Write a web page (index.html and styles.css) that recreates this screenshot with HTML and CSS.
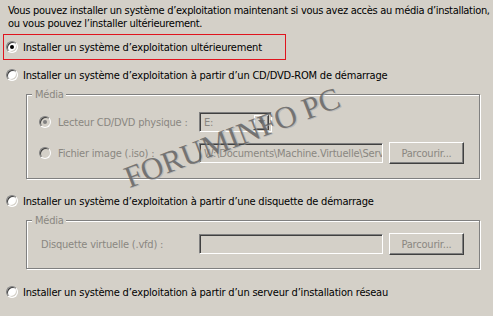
FILE: index.html
```html
<!DOCTYPE html>
<html lang="fr">
<head>
<meta charset="utf-8">
<title>Installation</title>
<link rel="stylesheet" href="styles.css">
</head>
<body>
<div class="page">
  <p class="intro">Vous pouvez installer un système d’exploitation maintenant si vous avez accès au média d’installation,<br>ou vous pouvez l’installer ultérieurement.</p>

  <div class="option option-focus"><span class="radio checked"></span><span class="option-text">Installer un système d’exploitation ultérieurement</span></div>

  <div class="option option-cd"><span class="radio"></span><span class="option-text">Installer un système d’exploitation à partir d’un CD/DVD-ROM de démarrage</span></div>

  <div class="group group-cd">
    <div class="legend">Média</div>
    <div class="field-row row-drive">
      <span class="radio disabled checked"></span>
      <span class="field-label">Lecteur CD/DVD physique :</span>
      <div class="combo">
        <span class="combo-value">E:</span>
        <span class="combo-btn"><svg width="7" height="4" viewBox="0 0 7 4"><path d="M0 0h7L3.5 4z" fill="#6f6f6f"/></svg></span>
      </div>
    </div>
    <div class="field-row row-iso">
      <span class="radio disabled"></span>
      <span class="field-label">Fichier image (.iso) :</span>
      <div class="textbox"><span class="textbox-value">W:\Documents\Machine.Virtuelle\Serv</span></div>
      <div class="button">Parcourir...</div>
    </div>
  </div>

  <div class="option option-floppy"><span class="radio"></span><span class="option-text">Installer un système d’exploitation à partir d’une disquette de démarrage</span></div>

  <div class="group group-floppy">
    <div class="legend">Média</div>
    <div class="field-row row-vfd">
      <span class="field-label field-label-wide">Disquette virtuelle (.vfd) :</span>
      <div class="textbox"></div>
      <div class="button">Parcourir...</div>
    </div>
  </div>

  <div class="option option-network"><span class="radio"></span><span class="option-text">Installer un système d’exploitation à partir d’un serveur d’installation réseau</span></div>

  <div class="watermark">FORUMINFO PC</div>
</div>
</body>
</html>
```
FILE: styles.css
```css
html, body {
  margin: 0;
  padding: 0;
  background: #d4d0c8;
}

.page {
  position: relative;
  width: 493px;
  height: 316px;
  overflow: hidden;
  font-family: "DejaVu Sans", Tahoma, sans-serif;
  font-stretch: condensed;
  font-size: 11px;
  line-height: 13px;
  letter-spacing: -0.2px;
  color: #000;
}

.intro {
  margin: 0;
  padding: 4px 0 0 8px;
  white-space: nowrap;
  letter-spacing: -0.3px;
}

.option {
  display: flex;
  align-items: center;
  gap: 5px;
  height: 16px;
  padding-left: 6px;
  white-space: nowrap;
}

.option-focus {
  box-sizing: border-box;
  width: 283px;
  height: 26px;
  margin: 4px 0 0 3px;
  padding-left: 2px;
  border: 1px solid #e0141e;
}

.option-cd { margin-top: 7px; }
.option-floppy { margin-top: 14px; }
.option-network { margin-top: 15px; }

.radio {
  position: relative;
  flex: none;
  box-sizing: border-box;
  width: 12px;
  height: 12px;
  border-radius: 50%;
  border: 1px solid;
  border-color: #808080 #ffffff #ffffff #808080;
  box-shadow: inset 1px 1px 0 #404040, inset -1px -1px 0 #d4d0c8;
  background: #ffffff;
}

.radio.checked::after {
  content: "";
  position: absolute;
  left: 3px;
  top: 3px;
  width: 4px;
  height: 4px;
  border-radius: 50%;
  background: #000;
}

.radio.disabled {
  background: #d4d0c8;
}

.radio.disabled.checked::after {
  background: #808080;
}

.group {
  box-sizing: border-box;
  width: 454px;
  margin-left: 26px;
  border: 1px solid #808080;
  box-shadow: inset 1px 1px 0 #ffffff, 1px 1px 0 #ffffff;
  padding-left: 12px;
}

.group-cd {
  height: 85px;
  margin-top: 11px;
}

.group-floppy {
  height: 49px;
  margin-top: 11px;
}

.legend {
  width: fit-content;
  margin: -7px 0 0 -7px;
  padding: 0 2px 0 3px;
  background: #d4d0c8;
  color: #8a8781;
}

.field-row {
  display: flex;
  align-items: center;
  color: #8a8781;
  white-space: nowrap;
}

.row-drive { height: 20px; margin-top: 11px; }
.row-iso { height: 22px; margin-top: 10px; }
.row-vfd { height: 22px; margin-top: 6px; }

.field-label {
  flex: none;
  box-sizing: border-box;
  width: 148px;
  min-width: 0;
  padding-left: 7px;
}

.field-label-wide {
  width: 160px;
  padding-left: 2px;
}

.combo,
.textbox {
  flex: none;
  box-sizing: border-box;
  display: flex;
  align-items: center;
  height: 20px;
  border: 1px solid;
  border-color: #808080 #ffffff #ffffff #808080;
  box-shadow: inset 1px 1px 0 #404040, inset -1px -1px 0 #d4d0c8;
  background: #d4d0c8;
  overflow: hidden;
  white-space: nowrap;
}

.combo {
  width: 73px;
  justify-content: space-between;
  padding: 2px;
}

.combo-value,
.textbox-value {
  padding-left: 2px;
  color: #8a8781;
}

.combo-btn {
  box-sizing: border-box;
  display: flex;
  align-items: center;
  justify-content: center;
  width: 16px;
  height: 16px;
  border: 1px solid;
  border-color: #d4d0c8 #404040 #404040 #d4d0c8;
  box-shadow: inset 1px 1px 0 #ffffff, inset -1px -1px 0 #808080;
}

.textbox {
  width: 184px;
  padding: 0 2px;
}

.button {
  flex: none;
  box-sizing: border-box;
  display: flex;
  align-items: center;
  justify-content: center;
  width: 75px;
  height: 22px;
  margin-left: 6px;
  border: 1px solid;
  border-color: #ffffff #404040 #404040 #ffffff;
  box-shadow: inset -1px -1px 0 #808080;
  color: #8a8781;
}

.watermark {
  position: absolute;
  left: 118px;
  top: 121px;
  font-family: "Liberation Serif", "Times New Roman", serif;
  font-stretch: normal;
  font-size: 31px;
  line-height: 34px;
  letter-spacing: 0;
  white-space: nowrap;
  color: rgba(95, 95, 95, 0.8);
  text-shadow: 1px 1px 0 rgba(170, 170, 170, 0.6);
  transform: rotate(-21deg);
  transform-origin: center;
  pointer-events: none;
}
```
